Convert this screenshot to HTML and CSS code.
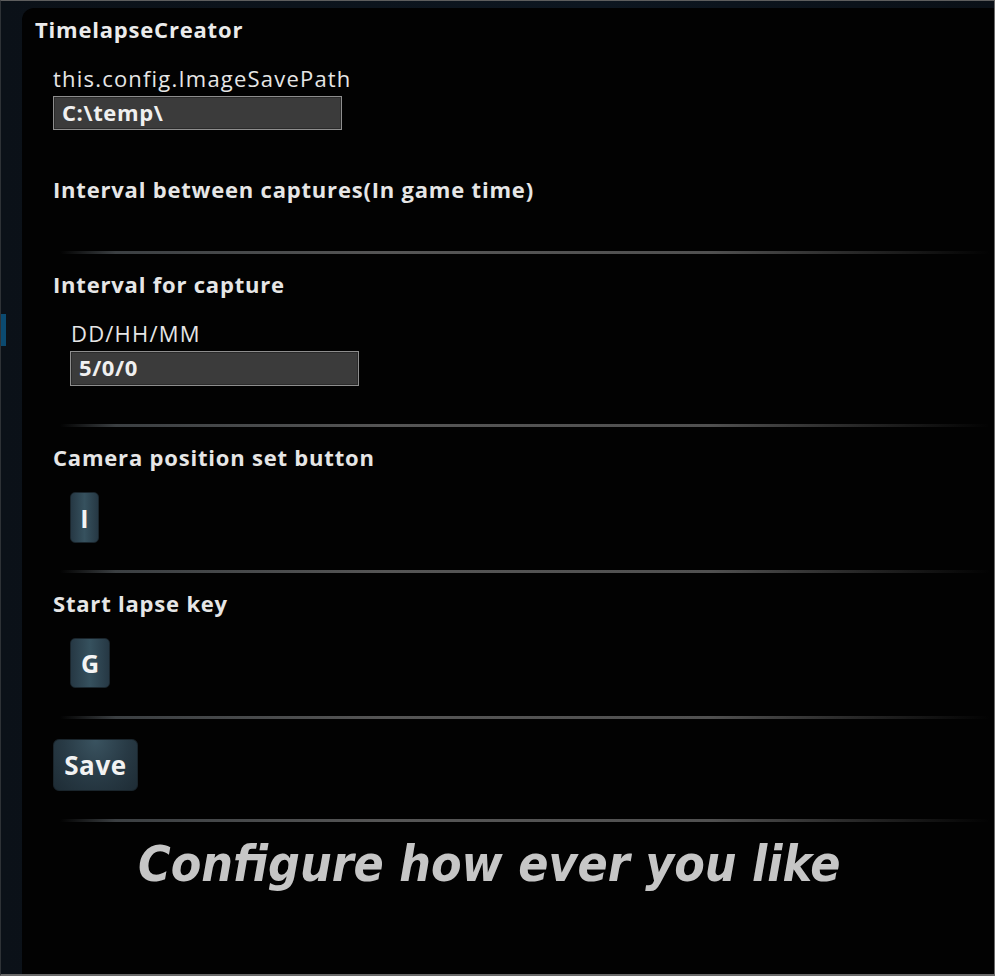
FILE: index.html
```html
<!DOCTYPE html>
<html>
<head>
<meta charset="utf-8">
<title>TimelapseCreator</title>
<link rel="stylesheet" href="styles.css">
</head>
<body>
<div class="window">
  <div class="rail"><div class="rail-mark"></div></div>
  <div class="panel">
    <div class="title">TimelapseCreator</div>
    <div class="section">
      <div class="label label-first">this.config.ImageSavePath</div>
      <div class="input input-path">C:\temp\</div>
      <div class="heading heading-between">Interval between captures(In game time)</div>
    </div>
    <div class="sep sep-1"></div>
    <div class="section">
      <div class="heading heading-after-sep">Interval for capture</div>
      <div class="sub">
        <div class="label label-second">DD/HH/MM</div>
        <div class="input input-interval">5/0/0</div>
      </div>
    </div>
    <div class="sep sep-2"></div>
    <div class="section">
      <div class="heading heading-after-sep">Camera position set button</div>
      <div class="sub">
        <div class="key key-i">I</div>
      </div>
    </div>
    <div class="sep sep-3"></div>
    <div class="section">
      <div class="heading heading-after-sep">Start lapse key</div>
      <div class="sub">
        <div class="key key-g">G</div>
      </div>
    </div>
    <div class="sep sep-4"></div>
    <div class="section">
      <div class="save">Save</div>
    </div>
    <div class="sep sep-5"></div>
    <div class="caption">Configure how ever you like</div>
  </div>
</div>
</body>
</html>
```

FILE: styles.css
```css
html, body {
  margin: 0;
  padding: 0;
  background: #000;
}

.window {
  box-sizing: border-box;
  width: 995px;
  height: 976px;
  display: flex;
  border-top: 1px solid #5e5e5e;
  border-right: 1px solid #6a6a6a;
  border-bottom: 2px solid #6a6a6a;
  border-left: 1px solid #2e3236;
  background: linear-gradient(90deg, #0b1118 0%, #0d1620 60%, #0a1017 100%);
  font-family: "Open Sans", "Noto Sans", sans-serif;
  color: #ececec;
  overflow: hidden;
}

.rail {
  width: 21px;
  flex: none;
}

.rail-mark {
  margin-top: 313px;
  width: 5px;
  height: 32px;
  background: #0b4a70;
}

.panel {
  flex: 1;
  margin-top: 7px;
  border-top-left-radius: 12px;
  background: #020202;
  padding-top: 9px;
}

.title {
  font-weight: 700;
  font-size: 22px;
  letter-spacing: 0.8px;
  line-height: 24px;
  padding-left: 13px;
  color: #ebebeb;
}

.section {
  padding-left: 31px;
}

.sub {
  padding-left: 17px;
}

.label {
  font-size: 22px;
  letter-spacing: 1.2px;
  line-height: 24px;
  font-weight: 400;
  color: #e6e6e6;
}

.label-first {
  margin-top: 25px;
}

.label-second {
  margin-top: 25px;
  padding-left: 1px;
}

.heading {
  font-size: 22px;
  letter-spacing: 0.8px;
  line-height: 24px;
  font-weight: 700;
  color: #e6e6e6;
}

.heading-between {
  margin-top: 47px;
}

.heading-after-sep {
  margin-top: 18px;
}

.input {
  box-sizing: border-box;
  margin-top: 6px;
  width: 289px;
  height: 34px;
  border: 1px solid #8e8e8e;
  background: #3b3b3b;
  box-shadow: inset 0 0 0 1px #2a2a2a;
  font-weight: 700;
  font-size: 22px;
  letter-spacing: 0.6px;
  line-height: 30px;
  padding-left: 8px;
  color: #f0f0f0;
}

.input-interval {
  height: 35px;
}

.sep {
  height: 3px;
  margin-left: 38px;
  margin-right: 4px;
  background: linear-gradient(90deg, rgba(70,74,78,0) 0%, #3b3f42 6%, #555555 35%, #505050 70%, rgba(60,62,64,0) 100%);
}

.sep-1 { margin-top: 50px; }
.sep-2 { margin-top: 38px; }
.sep-3 { margin-top: 27px; }
.sep-4 { margin-top: 28px; }
.sep-5 { margin-top: 28px; }

.key {
  box-sizing: border-box;
  margin-top: 23px;
  border-radius: 5px;
  background: linear-gradient(90deg, #263844 0%, #36515e 50%, #263844 100%);
  border: 1px solid #1a252c;
  color: #f4f4f4;
  font-weight: 700;
  font-size: 25px;
  display: flex;
  align-items: center;
  justify-content: center;
}

.key-i {
  width: 29px;
  height: 51px;
}

.key-g {
  width: 40px;
  height: 50px;
}

.save {
  box-sizing: border-box;
  margin-top: 20px;
  width: 85px;
  height: 52px;
  border-radius: 6px;
  background: radial-gradient(ellipse at 50% 0%, #3a5360 0%, #283a45 55%, #1e2c35 100%);
  border: 1px solid #1a252c;
  color: #f2f2f2;
  font-weight: 700;
  font-size: 26px;
  letter-spacing: 0.6px;
  display: flex;
  align-items: center;
  justify-content: center;
}

.caption {
  margin-top: 16px;
  margin-left: 116px;
  font-family: "DejaVu Sans Condensed", "DejaVu Sans", sans-serif;
  font-stretch: condensed;
  font-weight: 700;
  font-style: oblique;
  font-size: 49.5px;
  line-height: 52px;
  color: #c6c6c6;
  white-space: nowrap;
}
```
